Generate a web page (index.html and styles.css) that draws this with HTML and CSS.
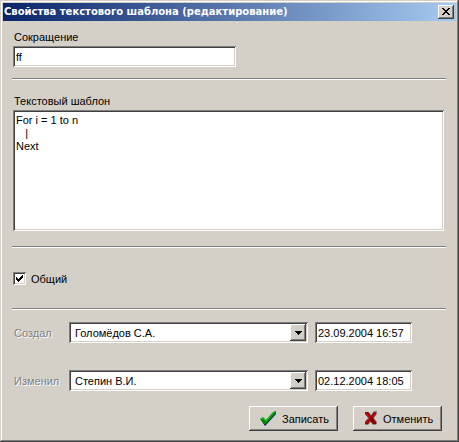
FILE: index.html
```html
<!DOCTYPE html>
<html lang="ru">
<head>
  <meta charset="UTF-8">
  <meta name="viewport" content="width=device-width, initial-scale=1.0">
  <title>Свойства текстового шаблона</title>
  <link rel="stylesheet" href="styles.css">
</head>
<body>
  <div class="window">
    <div class="titlebar">
      <h1 class="title">Свойства текстового шаблона (редактирование)</h1>
      <button class="close" type="button" aria-label="Закрыть">
        <svg width="8" height="7" viewBox="0 0 8 7" shape-rendering="crispEdges">
          <path d="M0 0h2v1h1v1h2v-1h1v-1h2v1h-1v1h-1v1h-1v1h1v1h1v1h1v1h-2v-1h-1v-1h-2v1h-1v1h-2v-1h1v-1h1v-1h1v-1h-1v-1h-1v-1h-1z"/>
        </svg>
      </button>
    </div>

    <form class="content">
      <label class="label" for="abbr">Сокращение</label>
      <input class="field abbr" id="abbr" type="text" value="ff">

      <hr class="line">

      <label class="label" for="template">Текстовый шаблон</label>
      <textarea class="field template" id="template" spellcheck="false">For i = 1 to n
   |
Next</textarea>

      <hr class="line">

      <label class="check">
        <input class="check-input" type="checkbox" checked>
        <svg class="check-mark" width="13" height="13" viewBox="0 0 13 13" shape-rendering="crispEdges">
          <path d="M3 5h1v1h1v1h1v-1h1v-1h1v-1h1v-1h1v3h-1v1h-1v1h-1v1h-1v1h-1v-1h-1v-1h-1z"/>
        </svg>
        <span>Общий</span>
      </label>

      <hr class="line">

      <div class="row">
        <label class="label disabled" for="created-by">Создал</label>
        <div class="combo">
          <select class="field select" id="created-by">
            <option>Голомёдов С.А.</option>
          </select>
          <span class="arrow"><svg width="7" height="4" viewBox="0 0 7 4" shape-rendering="crispEdges"><path d="M0 0h7v1h-1v1h-1v1h-1v1h-1v-1h-1v-1h-1v-1h-1z"/></svg></span>
        </div>
        <input class="field date" type="text" value="23.09.2004 16:57" aria-label="Дата создания">
      </div>

      <div class="row">
        <label class="label disabled" for="changed-by">Изменил</label>
        <div class="combo">
          <select class="field select" id="changed-by">
            <option>Степин В.И.</option>
          </select>
          <span class="arrow"><svg width="7" height="4" viewBox="0 0 7 4" shape-rendering="crispEdges"><path d="M0 0h7v1h-1v1h-1v1h-1v1h-1v-1h-1v-1h-1v-1h-1z"/></svg></span>
        </div>
        <input class="field date" type="text" value="02.12.2004 18:05" aria-label="Дата изменения">
      </div>

      <div class="buttons">
        <button class="button" type="submit">
          <svg width="17" height="15" viewBox="0 0 17 15">
            <path d="M1 9L3 8L6 10L14 2L16 1V3L6 14L5 15Z" fill="#000080"/>
            <path d="M0 8L3 6L6 9L13 1L16 0V2L6 13L5 14Z" fill="#008a00"/>
            <path d="M1 8L3 7L6 10L14 1" fill="none" stroke="#1cc81c"/>
          </svg>
          Записать
        </button>
        <button class="button" type="button">
          <svg width="14" height="15" viewBox="0 0 14 15">
            <path d="M1 1H5L7 4L10 0H13V3L10 7L13 11V13L11 14H9L7 11L4 14H1V11L4 7L1 3Z" fill="#808080"/>
            <path d="M1 1H4L7 5L10 1H12V3L9 7L12 11V13H9L6 10L4 13H1V11L5 7L1 3Z" fill="#900000"/>
            <path d="M2 2L6 7L2 12M8 6L12 1" fill="none" stroke="#e01010"/>
          </svg>
          Отменить
        </button>
      </div>
    </form>
  </div>
</body>
</html>
```

FILE: styles.css
```css
* {
  box-sizing: border-box;
}

body {
  margin: 0;
  background: #d4d0c8;
  color: #000;
  font-family: "Liberation Sans", Arial, sans-serif;
  font-size: 11px;
  line-height: 14px;
}

.window {
  min-height: 100vh;
  padding: 3px;
  box-shadow: inset -1px -1px #404040, inset 1px 1px #d4d0c8, inset -2px -2px #808080, inset 2px 2px #fff;
}

.titlebar {
  display: flex;
  align-items: center;
  justify-content: space-between;
  height: 18px;
  padding: 0 2px 0 1px;
  background: linear-gradient(to right, #0a246a, #a6caf0);
}

.title {
  margin: 0;
  color: #fff;
  font-family: "DejaVu Sans", Tahoma, sans-serif;
  font-size: 10px;
  font-weight: bold;
  white-space: nowrap;
}

.close,
.button,
.arrow {
  background: #d4d0c8;
  border: none;
  box-shadow: inset -1px -1px #404040, inset 1px 1px #fff, inset -2px -2px #808080;
}

.close {
  display: flex;
  align-items: center;
  justify-content: center;
  width: 16px;
  height: 14px;
  padding: 0 1px 1px 0;
}

.content {
  display: flex;
  flex-direction: column;
  align-items: flex-start;
  padding: 9px 12px 8px 10px;
}

.label {
  margin-bottom: 2px;
  padding-left: 1px;
}

.field {
  height: 21px;
  padding: 0 3px;
  border: none;
  border-radius: 0;
  outline: none;
  background: #fff;
  box-shadow: inset 1px 1px #808080, inset -1px -1px #fff, inset 2px 2px #404040, inset -2px -2px #d4d0c8;
  color: #000;
  font: inherit;
}

.abbr {
  width: 100%;
  max-width: 223px;
}

.template {
  align-self: stretch;
  height: 121px;
  padding: 4px 3px;
  line-height: 13px;
  resize: none;
}

.line {
  align-self: stretch;
  height: 2px;
  margin: 11px -2px 14px -1px;
  border: none;
  border-top: 1px solid #808080;
  background: #fff;
}

.template + .line {
  margin: 15px -2px 23px -1px;
}

.check {
  display: flex;
  align-items: center;
  position: relative;
  height: 15px;
}

.check-input {
  appearance: none;
  width: 13px;
  height: 13px;
  margin: 0 5px 0 0;
  background: #fff;
  box-shadow: inset 1px 1px #808080, inset -1px -1px #fff, inset 2px 2px #404040, inset -2px -2px #d4d0c8;
}

.check-mark {
  position: absolute;
  left: 0;
  top: 1px;
  visibility: hidden;
  pointer-events: none;
}

.check-input:checked + .check-mark {
  visibility: visible;
}

.check + .line {
  margin: 22px -2px 12px -1px;
}

.row {
  display: flex;
  align-items: center;
  align-self: stretch;
}

.row + .row {
  margin-top: 27px;
}

.row .label {
  width: 56px;
  margin: 0;
}

.disabled {
  color: #808080;
  text-shadow: 1px 1px #fff;
}

.combo {
  position: relative;
  flex: 0 1 239px;
  margin-right: 7px;
}

.select {
  display: block;
  appearance: none;
  width: 100%;
  padding: 0 20px 0 6px;
}

.arrow {
  display: flex;
  align-items: center;
  justify-content: center;
  position: absolute;
  top: 2px;
  right: 2px;
  width: 16px;
  height: 17px;
  pointer-events: none;
}

.date {
  width: 97px;
}

.buttons {
  display: flex;
  align-self: flex-end;
  gap: 15px;
  margin: 15px 2px 0 0;
}

.button {
  display: flex;
  align-items: center;
  gap: 5px;
  width: 89px;
  height: 25px;
  padding: 0 0 0 11px;
  color: #000;
  font: inherit;
}
```
